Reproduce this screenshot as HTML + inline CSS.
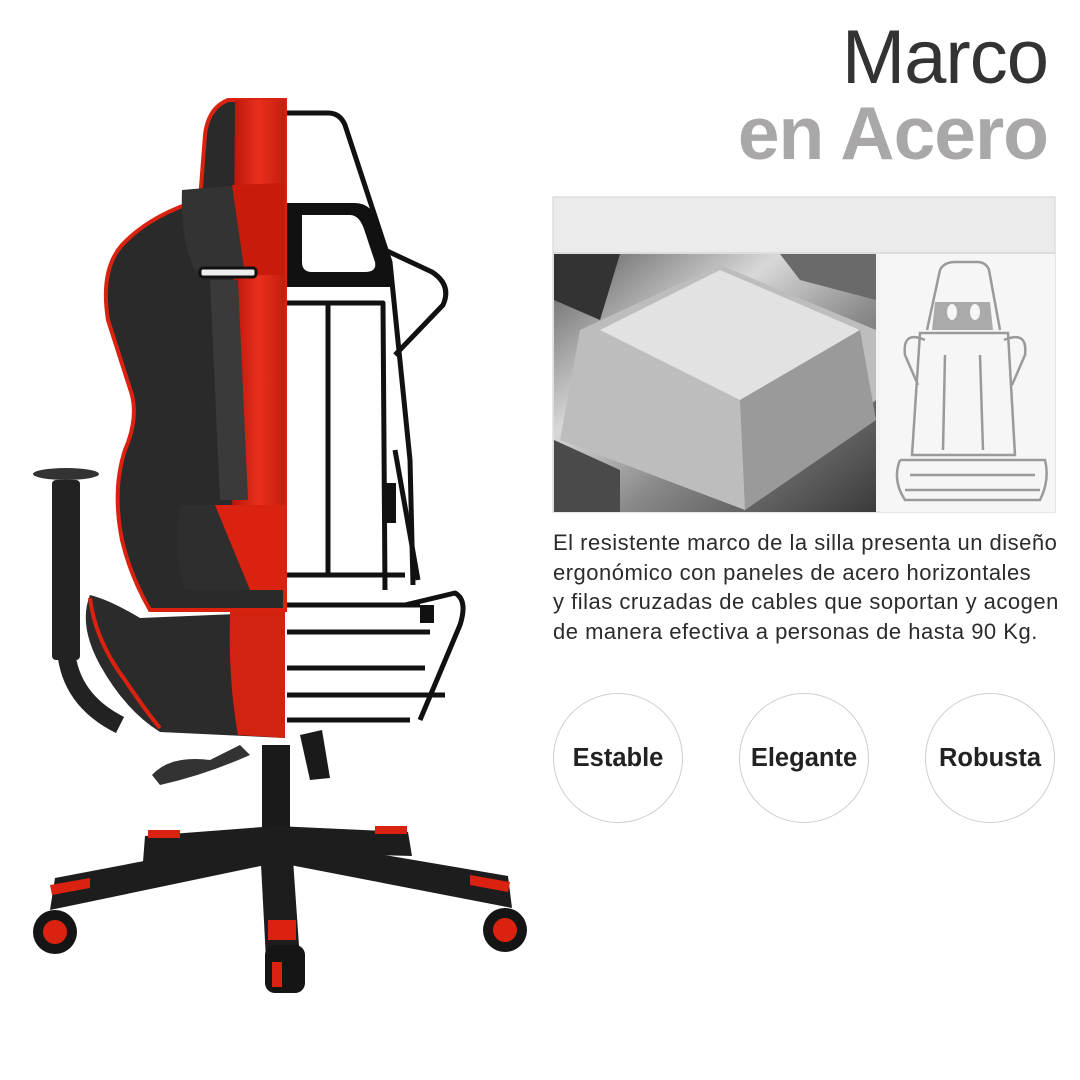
<!DOCTYPE html>
<html><head><meta charset="utf-8"><style>
body{margin:0;width:1080px;height:1080px;background:#fff;position:relative;overflow:hidden;font-family:"Liberation Sans",sans-serif}
.t1{position:absolute;right:32px;top:14px;font-size:76px;color:#333;font-weight:normal;letter-spacing:-1px}
.t2{position:absolute;right:32px;top:90px;font-size:75px;color:#a9a7a7;font-weight:bold;letter-spacing:-1px}
.p{position:absolute;left:553px;top:528px;font-size:22px;letter-spacing:0.5px;line-height:29.5px;color:#2b2b2b;white-space:nowrap}
.c{position:absolute;width:128px;height:128px;border:1.5px solid #cfcfcf;border-radius:50%;display:flex;align-items:center;justify-content:center;font-weight:bold;font-size:25.5px;color:#222;top:693px}
</style></head><body>
<div class="t1">Marco</div>
<div class="t2">en Acero</div>

<svg style="position:absolute;left:0;top:0" width="1080" height="1080">
<defs>
<linearGradient id="m1" x1="0" y1="0" x2="1" y2="1"><stop offset="0" stop-color="#5a5a5a"/><stop offset=".35" stop-color="#d8d8d8"/><stop offset=".6" stop-color="#8a8a8a"/><stop offset="1" stop-color="#3a3a3a"/></linearGradient>
<linearGradient id="rd" x1="0" y1="0" x2="1" y2="0"><stop offset="0" stop-color="#b8150a"/><stop offset=".5" stop-color="#e8301c"/><stop offset="1" stop-color="#c41d0e"/></linearGradient>
</defs>
<rect x="553" y="197" width="502" height="315" fill="#f2f2f2" stroke="#ccc"/>
<rect x="554" y="198" width="500" height="55" fill="#ebebeb"/>
<line x1="553" y1="253" x2="1055" y2="253" stroke="#ccc"/>
<rect x="554" y="254" width="322" height="258" fill="url(#m1)"/>
<polygon points="580,330 720,265 876,330 876,400 745,510 560,440" fill="#bdbdbd"/>
<polygon points="600,330 720,270 860,330 740,400" fill="#e2e2e2"/>
<polygon points="740,400 860,330 876,420 745,510" fill="#9a9a9a"/>
<polygon points="554,254 620,254 600,320 554,300" fill="#333"/>
<polygon points="554,440 620,470 620,512 554,512" fill="#4a4a4a"/>
<polygon points="780,254 876,254 876,300 800,280" fill="#6a6a6a"/>
<rect x="880" y="254" width="175" height="258" fill="#f6f6f6"/>
<g fill="none" stroke="#9a9a9a" stroke-width="2.5">
<path d="M927,330 L940,270 Q944,262 955,262 L977,262 Q986,262 989,270 L1000,330"/>
<path d="M920,333 L1008,333 L1015,455 L912,455 Z"/>
<path d="M925,340 Q902,330 905,355 L918,385 M1004,340 Q1028,330 1025,355 L1012,385"/>
<path d="M900,460 Q892,480 905,500 L1040,500 Q1050,480 1045,460 L900,460"/>
<path d="M910,475 L1035,475 M905,490 L1040,490"/>
<path d="M945,355 L943,450 M980,355 L983,450"/>
</g>
<path d="M935,302 L990,302 L993,330 L932,330Z" fill="#aaa"/>
<ellipse cx="952" cy="312" rx="5" ry="8" fill="#f6f6f6"/><ellipse cx="975" cy="312" rx="5" ry="8" fill="#f6f6f6"/>

<g fill="none" stroke="#111" stroke-width="5" stroke-linejoin="round">
<path d="M287,113 L328,113 Q340,113 345,125 L390,262 L410,460 L413,585"/>
<path d="M385,250 L432,272 Q452,285 443,305 L395,355"/>
<path d="M287,303 L383,303 L385,590"/>
<path d="M328,305 L328,575"/>
<path d="M287,575 L405,575 M287,605 L420,605 M287,632 L430,632 M287,668 L425,668 M287,695 L445,695 M287,720 L410,720"/>
<path d="M405,605 L455,593 Q468,600 460,625 L420,720"/>
<path d="M395,450 L418,580"/>
</g>
<path d="M287,203 L355,203 Q372,203 380,225 L392,262 L392,287 L287,287Z" fill="#111"/>
<path d="M302,215 L350,215 Q360,215 365,232 L375,262 Q377,272 365,272 L312,272 Q302,272 302,262Z" fill="#fff"/>
<rect x="384" y="483" width="12" height="40" fill="#111"/>
<rect x="420" y="605" width="14" height="18" fill="#111"/>
<path d="M300,735 L310,780 L330,778 L322,730Z" fill="#1a1a1a"/>

<path d="M285,100 L228,100 Q208,108 205,135 L200,200 Q150,215 122,245 Q100,270 108,320 L132,395 Q138,420 125,450 Q112,490 122,540 Q130,575 150,610 L285,610Z" fill="#2a2a2a" stroke="#d9220f" stroke-width="4"/>
<path d="M285,100 L235,100 L232,540 L285,540Z" fill="url(#rd)"/>
<path d="M182,190 L240,185 L248,270 L195,270 Q180,240 182,190Z" fill="#333"/>
<path d="M232,185 L285,183 L285,275 L245,275Z" fill="#c81b0c"/>
<rect x="200" y="268" width="56" height="9" rx="3" fill="#eee" stroke="#111" stroke-width="3"/>
<path d="M210,280 L238,280 L248,500 L220,500Z" fill="#3a3a3a"/>
<path d="M180,505 L285,505 L285,590 L185,590 Q172,550 180,505Z" fill="#2e2e2e"/>
<path d="M215,505 L285,505 L285,590 L250,590Z" fill="#d9220f"/>
<path d="M90,595 Q78,625 100,665 Q125,710 160,732 L285,738 L285,612 L140,618 Q110,600 90,595Z" fill="#2b2b2b"/>
<path d="M90,598 Q95,640 125,680 Q145,710 160,728" fill="none" stroke="#d9220f" stroke-width="4"/>
<path d="M230,612 L285,612 L285,738 L238,735 Q228,680 230,612Z" fill="#d42210"/>
<ellipse cx="66" cy="474" rx="33" ry="6" fill="#333"/>
<rect x="52" y="480" width="28" height="180" rx="4" fill="#222"/>
<path d="M66,650 Q70,700 120,725" fill="none" stroke="#222" stroke-width="18"/>
<path d="M152,775 Q170,755 210,760 L240,745 L250,755 Q205,775 160,785Z" fill="#333"/>
<rect x="262" y="745" width="28" height="95" fill="#1a1a1a"/>
<path d="M276,826 L145,836 L143,862 L276,852Z" fill="#1d1d1d"/>
<path d="M276,826 L408,832 L412,856 L276,852Z" fill="#1d1d1d"/>
<path d="M265,838 L55,878 L50,910 L270,864Z" fill="#1d1d1d"/>
<path d="M285,838 L508,876 L512,908 L285,864Z" fill="#1d1d1d"/>
<path d="M260,845 L292,845 L300,960 L266,960Z" fill="#1d1d1d"/>
<rect x="148" y="830" width="32" height="8" fill="#d9220f"/>
<rect x="375" y="826" width="32" height="8" fill="#d9220f"/>
<path d="M50,885 L90,878 L90,888 L52,895Z" fill="#d9220f"/>
<path d="M470,875 L510,882 L508,892 L470,885Z" fill="#d9220f"/>
<rect x="268" y="920" width="28" height="20" fill="#d9220f"/>
<circle cx="55" cy="932" r="22" fill="#151515"/><circle cx="55" cy="932" r="12" fill="#d9220f"/>
<circle cx="505" cy="930" r="22" fill="#151515"/><circle cx="505" cy="930" r="12" fill="#d9220f"/>
<rect x="265" y="945" width="40" height="48" rx="10" fill="#151515"/><rect x="272" y="962" width="10" height="25" fill="#d9220f"/>
</svg>

<div class="p">El resistente marco de la silla presenta un diseño<br>ergonómico con paneles de acero horizontales<br>y filas cruzadas de cables que soportan y acogen<br>de manera efectiva a personas de hasta 90 Kg.</div>
<div class="c" style="left:553px">Estable</div>
<div class="c" style="left:739px">Elegante</div>
<div class="c" style="left:925px">Robusta</div>
</body></html>
